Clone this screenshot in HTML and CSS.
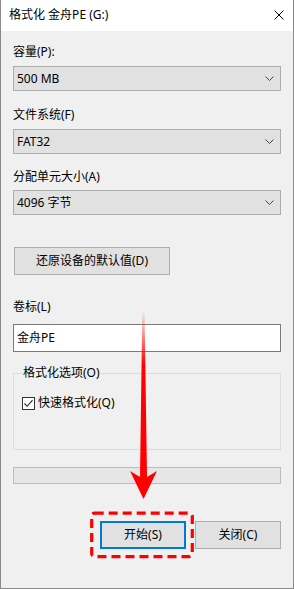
FILE: index.html
```html
<!DOCTYPE html>
<html>
<head>
<meta charset="utf-8">
<link rel="stylesheet" href="styles.css">
</head>
<body>
<div class="window">
  <div class="titlebar">
    <span class="title">格式化 金舟PE (G:)</span>
    <svg class="close" width="10" height="10" viewBox="0 0 10 10"><path d="M0.5 0.5 L9.5 9.5 M9.5 0.5 L0.5 9.5" stroke="#000" stroke-width="1" fill="none"/></svg>
  </div>
  <div class="content">
    <div class="label first">容量(P):</div>
    <div class="select s1"><span>500 MB</span><svg class="chev" width="9" height="5" viewBox="0 0 9 5"><path d="M0.5 0.5 L4.5 4.5 L8.5 0.5" stroke="#444" stroke-width="1" fill="none"/></svg></div>
    <div class="label l2">文件系统(F)</div>
    <div class="select s2"><span>FAT32</span><svg class="chev" width="9" height="5" viewBox="0 0 9 5"><path d="M0.5 0.5 L4.5 4.5 L8.5 0.5" stroke="#444" stroke-width="1" fill="none"/></svg></div>
    <div class="label l3">分配单元大小(A)</div>
    <div class="select s3"><span>4096 字节</span><svg class="chev" width="9" height="5" viewBox="0 0 9 5"><path d="M0.5 0.5 L4.5 4.5 L8.5 0.5" stroke="#444" stroke-width="1" fill="none"/></svg></div>
    <div class="btn restore">还原设备的默认值(D)</div>
    <div class="label l4">卷标(L)</div>
    <div class="input">金舟PE</div>
    <div class="group">
      <div class="legend">格式化选项(O)</div>
      <div class="check">
        <span class="box"><svg width="11" height="11" viewBox="0 0 11 11"><path d="M1.5 5.5 L4.2 8.3 L9.5 2.2" stroke="#222" stroke-width="1.1" fill="none"/></svg></span>
        <span>快速格式化(Q)</span>
      </div>
    </div>
    <div class="progress"></div>
    <div class="actions">
      <div class="btn action primary">开始(S)</div>
      <div class="btn action">关闭(C)</div>
    </div>
  </div>
  <svg class="annot" width="294" height="589" viewBox="0 0 294 589">
    <defs>
      <linearGradient id="fade" x1="0" y1="310" x2="0" y2="365" gradientUnits="userSpaceOnUse">
        <stop offset="0" stop-color="#ff0000" stop-opacity="0"/>
        <stop offset="1" stop-color="#ff0000" stop-opacity="1"/>
      </linearGradient>
    </defs>
    <polygon points="142.3,310 144.5,310 147,477 157,471 143.5,499 130,471 140,477" fill="url(#fade)"/>
    <rect x="91.7" y="513.2" width="100.6" height="43.4" rx="3" fill="none" stroke="#ff0000" stroke-width="3.2" stroke-dasharray="9 5"/>
  </svg>
</div>
</body>
</html>
```

FILE: styles.css
```css
html, body {
  margin: 0;
  padding: 0;
}
body {
  width: 294px;
  height: 589px;
  overflow: hidden;
  font-family: "Noto Sans", "Noto Sans CJK SC", sans-serif;
  font-size: 12px;
  color: #000;
}
.window {
  position: relative;
  width: 294px;
  height: 589px;
  box-sizing: border-box;
  border: 1px solid #8a8a8a;
  border-top: none;
  background: #f0f0f0;
}
.titlebar {
  height: 31px;
  background: #fff;
  display: flex;
  align-items: center;
  justify-content: space-between;
  padding: 0 9px 0 8px;
}
.title {
  line-height: 16px;
  margin-top: -1px;
}
.close {
  display: block;
  margin-top: -1px;
}
.content {
  display: flex;
  flex-direction: column;
  padding: 0 12px;
}
.label {
  line-height: 16px;
  height: 16px;
}
.first { margin-top: 13px; }
.l2 { margin-top: 16px; }
.l3 { margin-top: 15px; }
.l4 { margin-top: 24px; }
.select {
  box-sizing: border-box;
  height: 25px;
  border: 1px solid #adadad;
  background: #e1e1e1;
  display: flex;
  align-items: center;
  justify-content: space-between;
  padding: 0 6px 0 3px;
  line-height: 16px;
}
.s1 { margin-top: 6px; }
.s2 { margin-top: 6px; }
.s3 { margin-top: 5px; }
.chev { display: block; }
.btn {
  box-sizing: border-box;
  height: 28px;
  border: 1px solid #adadad;
  background: #e1e1e1;
  display: flex;
  align-items: center;
  justify-content: center;
  line-height: 16px;
}
.restore {
  margin-top: 32px;
  margin-left: 1px;
  width: 156px;
}
.input {
  box-sizing: border-box;
  margin-top: 9px;
  height: 28px;
  border: 1px solid #7a7a7a;
  background: #fff;
  display: flex;
  align-items: center;
  padding: 0 3px;
  line-height: 16px;
}
.group {
  box-sizing: border-box;
  margin-top: 21px;
  height: 77px;
  border: 1px solid #dcdcdc;
  padding: 0 0 0 8px;
}
.legend {
  width: fit-content;
  margin-top: -9px;
  padding: 0 1px;
  background: #f0f0f0;
  line-height: 16px;
}
.check {
  margin-top: 14px;
  display: flex;
  align-items: center;
  gap: 3px;
  line-height: 16px;
}
.box {
  box-sizing: border-box;
  width: 13px;
  height: 13px;
  border: 1px solid #333;
  background: #fff;
  display: flex;
  align-items: center;
  justify-content: center;
}
.box svg { display: block; }
.progress {
  box-sizing: border-box;
  margin-top: 17px;
  height: 17px;
  border: 1px solid #bcbcbc;
  background: #e6e6e6;
}
.actions {
  margin-top: 37px;
  display: flex;
  justify-content: flex-end;
  gap: 9px;
}
.action {
  width: 86px;
}
.primary {
  border: 2px solid #0078d7;
}
.annot {
  position: absolute;
  left: -1px;
  top: 0;
  pointer-events: none;
}
```
